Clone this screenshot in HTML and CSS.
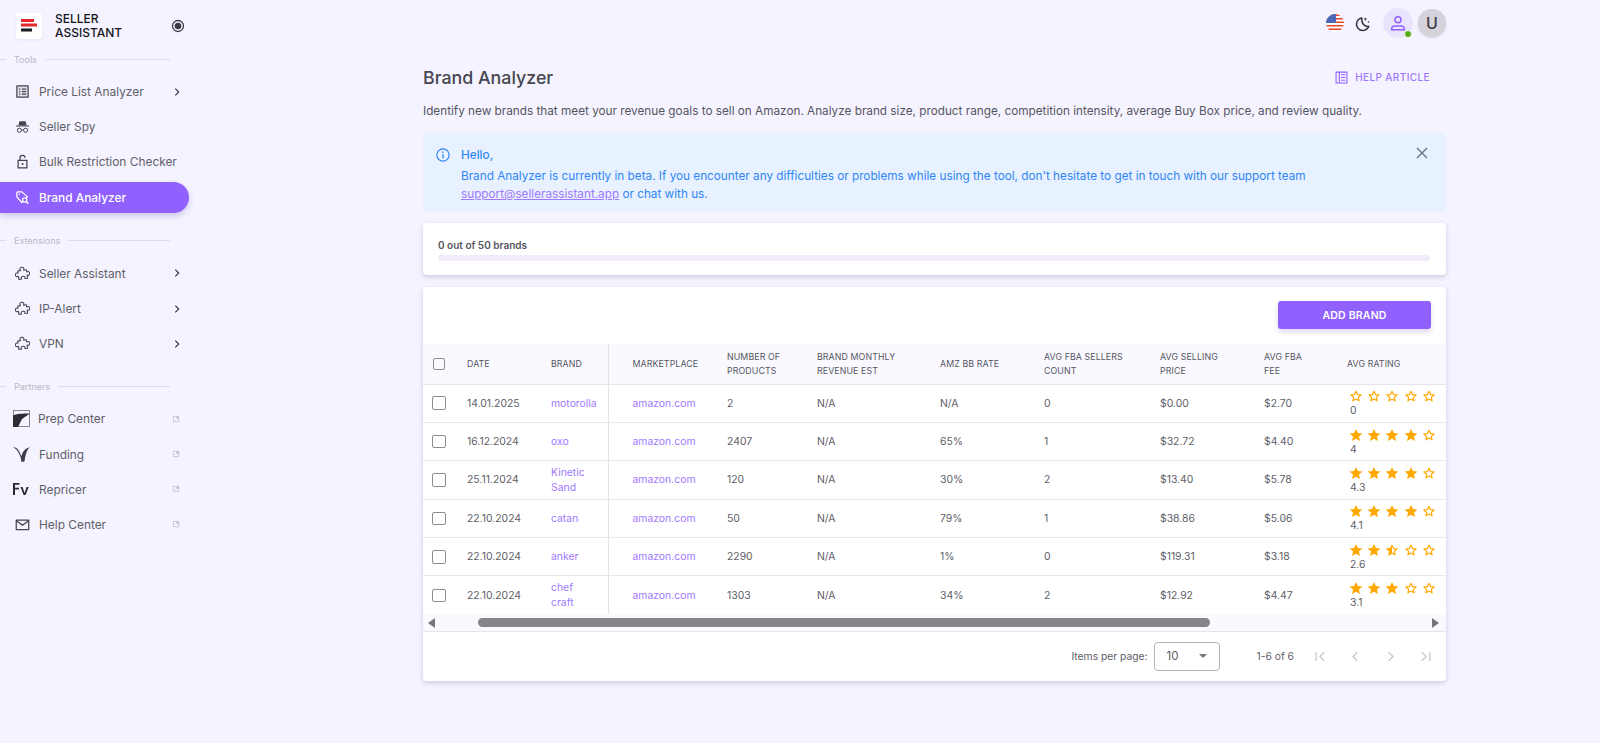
FILE: index.html
```html
<!DOCTYPE html>
<html lang="en">
<head>
<meta charset="utf-8">
<title>Brand Analyzer</title>
<link rel="stylesheet" href="styles.css">
</head>
<body>
<svg class="defs" width="0" height="0" aria-hidden="true">
  <defs>
    <symbol id="ext" viewBox="0 0 24 24"><path fill="none" stroke="currentColor" stroke-width="2" d="M4 4h16v16H4zM10 14l8-8M12 6h6v6"/></symbol>
    <symbol id="puzzle" viewBox="0 0 24 24"><path fill="none" stroke="currentColor" stroke-width="1.700" stroke-linejoin="round" transform="rotate(-8 12 12)" d="M5 7H9.500C7.800 4 9.500 2 12 2S16.200 4 14.500 7H19V10.500C22 9 23.500 11 23.500 13S22 17 19 15.500V20.500H14.500C16 18 14.500 16.500 12 16.500S8 18 9.500 20.500H5V15.500C2 17 .5 15 .5 13S2 9 5 10.500Z"/></symbol>
    <symbol id="chev" viewBox="0 0 24 24"><path fill="none" stroke="currentColor" stroke-width="2.800" d="M8 4l8 8-8 8"/></symbol>
    <symbol id="sf" viewBox="0 0 24 24"><path fill="#ffa800" d="M12 1.500l3.200 7.200 7.800.8-5.900 5.200 1.700 7.700L12 18.400l-6.800 4 1.700-7.700L1 9.500l7.800-.8z"/></symbol>
    <symbol id="se" viewBox="0 0 24 24"><path fill="none" stroke="#ffa800" stroke-width="2" stroke-linejoin="round" d="M12 4l2.500 5.600 6.100.6-4.600 4.100 1.300 6L12 17.200l-5.300 3.100 1.300-6-4.600-4.100 6.100-.6z"/></symbol>
    <symbol id="sh" viewBox="0 0 24 24"><path fill="none" stroke="#ffa800" stroke-width="2" stroke-linejoin="round" d="M12 4l2.500 5.600 6.100.6-4.600 4.100 1.300 6L12 17.200"/><path fill="#ffa800" d="M12 1.500v16.900l-6.800 4 1.700-7.700L1 9.500l7.800-.8z"/></symbol>
  </defs>
</svg>

<div class="app">
  <aside class="sidebar">
    <div class="brandbar">
      <span class="logo">
        <svg width="18" height="14" viewBox="0 0 18 14"><rect x="1" y="0" width="13" height="3" fill="#e8262a"/><rect x="1" y="4.500" width="16" height="3" fill="#e8262a"/><rect x="1" y="9.500" width="11" height="3" fill="#1c1c22"/></svg>
      </span>
      <span class="logotext">SELLER<br>ASSISTANT</span>
      <svg class="radio" width="14" height="14" viewBox="0 0 14 14"><circle cx="7" cy="7" r="5.500" fill="none" stroke="#3a3a44" stroke-width="1.300"/><circle cx="7" cy="7" r="3.300" fill="#3a3a44"/></svg>
    </div>

    <div class="seclabel sec-tools">Tools</div>
    <nav class="menu">
      <a class="item"><svg class="ico" viewBox="0 0 24 24"><path fill="#e3e1ea" stroke="currentColor" stroke-width="2" stroke-linejoin="round" d="M3 3h18v18H3z"/><path fill="none" stroke="currentColor" stroke-width="2" d="M6.500 8h2M11 8h7M6.500 12h2M11 12h7M6.500 16h2M11 16h7"/></svg><span class="lbl">Price List Analyzer</span><svg class="chev"><use href="#chev"/></svg></a>
      <a class="item"><svg class="ico" viewBox="0 0 24 24"><path fill="currentColor" d="M7 3.500h10l1.500 6.500h-13zM1.500 10.500h21v1.600h-21z"/><circle cx="7" cy="18" r="3.300" fill="none" stroke="currentColor" stroke-width="1.600"/><circle cx="17" cy="18" r="3.300" fill="none" stroke="currentColor" stroke-width="1.600"/><path fill="none" stroke="currentColor" stroke-width="1.600" d="M10.300 17.500h3.400"/></svg><span class="lbl">Seller Spy</span></a>
      <a class="item"><svg class="ico" viewBox="0 0 24 24"><path fill="none" stroke="currentColor" stroke-width="2" d="M5 10h14v12H5zM8 10V6a4 4 0 0 1 8 0"/><circle cx="12" cy="16" r="1.600" fill="currentColor"/></svg><span class="lbl">Bulk Restriction Checker</span></a>
      <a class="item active"><svg class="ico" viewBox="0 0 24 24"><path fill="none" stroke="currentColor" stroke-width="2" stroke-linejoin="round" d="M3 3h8l9 8-2 2M3 3v8l8 9 2-2"/><circle cx="6.800" cy="6.800" r="1.200" fill="currentColor"/><circle cx="15.500" cy="16" r="3.300" fill="none" stroke="currentColor" stroke-width="2"/><path fill="none" stroke="currentColor" stroke-width="2" d="M18 18.500l3.500 3.500"/></svg><span class="lbl">Brand Analyzer</span></a>
    </nav>

    <div class="seclabel sec-ext">Extensions</div>
    <nav class="menu">
      <a class="item"><svg class="ico"><use href="#puzzle"/></svg><span class="lbl">Seller Assistant</span><svg class="chev"><use href="#chev"/></svg></a>
      <a class="item"><svg class="ico"><use href="#puzzle"/></svg><span class="lbl">IP-Alert</span><svg class="chev"><use href="#chev"/></svg></a>
      <a class="item"><svg class="ico"><use href="#puzzle"/></svg><span class="lbl">VPN</span><svg class="chev"><use href="#chev"/></svg></a>
    </nav>

    <div class="seclabel sec-part">Partners</div>
    <nav class="menu">
      <a class="item"><svg class="ico ico-wide" viewBox="0 0 17 17"><rect x="0.500" y="0.500" width="16" height="16" fill="#f5f3ff" stroke="#85858c"/><path fill="#2c2c33" d="M0 5.500C3 3.800 10 3.500 17 3.500L9 9 5 17H0z"/></svg><span class="lbl lbl-near">Prep Center</span><svg class="ext"><use href="#ext"/></svg></a>
      <a class="item"><svg class="ico ico-wide" viewBox="0 0 17 17"><path fill="#3c3a45" d="M0 1c3 0 5.500 2 7 6 .5 1.500 1 2 1.500 3.500C9.500 5.500 12 2.500 17 1c-3 2.500-4.500 7-5.500 14.500L8.500 16C8 11 6 4.500 0 1z"/></svg><span class="lbl">Funding</span><svg class="ext"><use href="#ext"/></svg></a>
      <a class="item"><svg class="ico ico-wide" viewBox="0 0 17 17"><path fill="#2c2c33" d="M0 2h6.500v1.800H2v3h4v1.800H2V14H0zM7.500 6h2.100l2 6 2-6h2.100l-3.100 8h-2z"/></svg><span class="lbl">Repricer</span><svg class="ext"><use href="#ext"/></svg></a>
      <a class="item"><svg class="ico" viewBox="0 0 24 24"><path fill="none" stroke="currentColor" stroke-width="2" stroke-linejoin="round" d="M2 5h20v15H2zM2 6l10 7 10-7"/></svg><span class="lbl">Help Center</span><svg class="ext"><use href="#ext"/></svg></a>
    </nav>
  </aside>

  <main class="main">
    <header class="topbar">
      <svg class="flag" viewBox="0 0 18 18">
        <clipPath id="fc"><circle cx="9" cy="9" r="9"/></clipPath>
        <g clip-path="url(#fc)">
          <rect width="18" height="18" fill="#fff"/>
          <path fill="#e8452f" d="M0 0h18v2H0zM0 4h18v1.500H0zM0 7.500h18V9H0zM0 11h18v1.500H0zM0 14.500h18V16H0z"/>
          <rect width="10" height="9" fill="#4b69b8"/>
        </g>
      </svg>
      <svg class="moon" viewBox="0 0 24 24"><path fill="none" stroke="#33333c" stroke-width="2" stroke-linejoin="round" d="M11 4a9 9 0 1 0 10 12c-6 1-11-4-10-12z"/><path fill="#33333c" d="M16 3l.8 1.900 1.900.8-1.900.8L16 8.500l-.8-2-1.900-.8 1.900-.8zM20.500 8l.5 1.300 1.300.5-1.300.5-.5 1.300-.5-1.300-1.300-.5 1.300-.5z"/></svg>
      <span class="userbtn">
        <svg width="18" height="18" viewBox="0 0 24 24"><circle cx="12" cy="7.500" r="4" fill="none" stroke="#9061ff" stroke-width="2"/><path fill="none" stroke="#9061ff" stroke-width="2" d="M3.500 21v-1.500c0-2 2-3.500 4-3.500h9c2 0 4 1.500 4 3.500V21z"/></svg>
        <span class="dot"></span>
      </span>
      <span class="avatar">U</span>
    </header>

    <div class="titlerow">
      <h1 class="title">Brand Analyzer</h1>
      <a class="help">
        <svg width="13" height="13" viewBox="0 0 24 24"><path fill="none" stroke="#9061ff" stroke-width="2" d="M2 2h20v20H2zM8 2v20M11 7h8M11 12h8M11 17h8"/></svg>
        HELP ARTICLE
      </a>
    </div>
    <p class="desc">Identify new brands that meet your revenue goals to sell on Amazon. Analyze brand size, product range, competition intensity, average Buy Box price, and review quality.</p>

    <section class="alert">
      <svg class="alert-ico" width="14" height="14" viewBox="0 0 24 24"><circle cx="12" cy="12" r="10.500" fill="none" stroke="#2f86f6" stroke-width="2"/><path fill="none" stroke="#2f86f6" stroke-width="2.200" d="M12 10.500v7M12 6v2.500"/></svg>
      <div class="alert-body">
        <div class="alert-head">Hello,</div>
        <div>Brand Analyzer is currently in beta. If you encounter any difficulties or problems while using the tool, don't hesitate to get in touch with our support team<br><a class="mail">support@sellerassistant.app</a> or chat with us.</div>
      </div>
      <svg class="close" width="12" height="12" viewBox="0 0 12 12"><path fill="none" stroke="#6c7380" stroke-width="1.400" d="M1 1l10 10M11 1L1 11"/></svg>
    </section>

    <section class="card progress">
      <div class="progress-label">0 out of 50 brands</div>
      <div class="progress-track"></div>
    </section>

    <section class="card tablecard">
      <div class="actions"><button class="addbtn">ADD BRAND</button></div>
      <table class="grid">
        <colgroup>
          <col class="c1"><col class="c2"><col class="c3"><col class="c4"><col class="c5"><col class="c6"><col class="c7"><col class="c8"><col class="c9"><col class="c10"><col class="c11">
        </colgroup>
        <thead>
          <tr>
            <th><span class="cb cb-h"></span></th><th>DATE</th><th class="sticky">BRAND</th><th class="mp">MARKETPLACE</th><th>NUMBER OF<br>PRODUCTS</th><th>BRAND MONTHLY<br>REVENUE EST</th><th>AMZ BB RATE</th><th>AVG FBA SELLERS<br>COUNT</th><th>AVG SELLING<br>PRICE</th><th>AVG FBA<br>FEE</th><th>AVG RATING</th>
          </tr>
        </thead>
        <tbody>
          <tr>
            <td><span class="cb"></span></td><td>14.01.2025</td><td class="sticky link">motorolla</td><td class="mp link">amazon.com</td><td>2</td><td>N/A</td><td>N/A</td><td>0</td><td>$0.00</td><td>$2.70</td>
            <td class="ratecell"><div class="stars"><svg><use href="#se"/></svg><svg><use href="#se"/></svg><svg><use href="#se"/></svg><svg><use href="#se"/></svg><svg><use href="#se"/></svg></div><div class="rate">0</div></td>
          </tr>
          <tr>
            <td><span class="cb"></span></td><td>16.12.2024</td><td class="sticky link">oxo</td><td class="mp link">amazon.com</td><td>2407</td><td>N/A</td><td>65%</td><td>1</td><td>$32.72</td><td>$4.40</td>
            <td class="ratecell"><div class="stars"><svg><use href="#sf"/></svg><svg><use href="#sf"/></svg><svg><use href="#sf"/></svg><svg><use href="#sf"/></svg><svg><use href="#se"/></svg></div><div class="rate">4</div></td>
          </tr>
          <tr>
            <td><span class="cb"></span></td><td>25.11.2024</td><td class="sticky link">Kinetic<br>Sand</td><td class="mp link">amazon.com</td><td>120</td><td>N/A</td><td>30%</td><td>2</td><td>$13.40</td><td>$5.78</td>
            <td class="ratecell"><div class="stars"><svg><use href="#sf"/></svg><svg><use href="#sf"/></svg><svg><use href="#sf"/></svg><svg><use href="#sf"/></svg><svg><use href="#se"/></svg></div><div class="rate">4.3</div></td>
          </tr>
          <tr>
            <td><span class="cb"></span></td><td>22.10.2024</td><td class="sticky link">catan</td><td class="mp link">amazon.com</td><td>50</td><td>N/A</td><td>79%</td><td>1</td><td>$38.86</td><td>$5.06</td>
            <td class="ratecell"><div class="stars"><svg><use href="#sf"/></svg><svg><use href="#sf"/></svg><svg><use href="#sf"/></svg><svg><use href="#sf"/></svg><svg><use href="#se"/></svg></div><div class="rate">4.1</div></td>
          </tr>
          <tr>
            <td><span class="cb"></span></td><td>22.10.2024</td><td class="sticky link">anker</td><td class="mp link">amazon.com</td><td>2290</td><td>N/A</td><td>1%</td><td>0</td><td>$119.31</td><td>$3.18</td>
            <td class="ratecell"><div class="stars"><svg><use href="#sf"/></svg><svg><use href="#sf"/></svg><svg><use href="#sh"/></svg><svg><use href="#se"/></svg><svg><use href="#se"/></svg></div><div class="rate">2.6</div></td>
          </tr>
          <tr>
            <td><span class="cb"></span></td><td>22.10.2024</td><td class="sticky link">chef<br>craft</td><td class="mp link">amazon.com</td><td>1303</td><td>N/A</td><td>34%</td><td>2</td><td>$12.92</td><td>$4.47</td>
            <td class="ratecell"><div class="stars"><svg><use href="#sf"/></svg><svg><use href="#sf"/></svg><svg><use href="#sf"/></svg><svg><use href="#se"/></svg><svg><use href="#se"/></svg></div><div class="rate">3.1</div></td>
          </tr>
        </tbody>
      </table>
      <div class="hscroll">
        <span class="arrow arrow-l"></span>
        <span class="track"><span class="thumb"></span></span>
        <span class="arrow arrow-r"></span>
      </div>
      <footer class="pager">
        <span class="ipp">Items per page:</span>
        <span class="select"><span>10</span><span class="caret"></span></span>
        <span class="range">1-6 of 6</span>
        <span class="pbtns">
          <svg viewBox="0 0 24 24"><path d="M5 5v14M18 5l-7 7 7 7"/></svg>
          <svg viewBox="0 0 24 24"><path d="M15 5l-7 7 7 7"/></svg>
          <svg viewBox="0 0 24 24"><path d="M9 5l7 7-7 7"/></svg>
          <svg viewBox="0 0 24 24"><path d="M6 5l7 7-7 7M19 5v14"/></svg>
        </span>
      </footer>
    </section>
  </main>
</div>
</body>
</html>
```
FILE: styles.css
```css
* { box-sizing: border-box; }
html, body { margin: 0; padding: 0; height: 100%; overflow: hidden; }
body { background: #f5f3ff; font-family: Inter, "Liberation Sans", sans-serif; color: #55555f; font-size: 12px; }
.defs { position: absolute; }
.app { display: flex; height: 743px; }

.sidebar { width: 200px; flex: none; padding-top: 13px; }
.brandbar { display: flex; align-items: center; height: 26px; padding-left: 16px; padding-right: 15px; }
.logo { width: 26px; height: 26px; background: #fff; border-radius: 3px; display: flex; align-items: center; justify-content: center; box-shadow: 0 1px 3px rgba(60,40,120,.07); flex: none; }
.logotext { margin-left: 13px; font-size: 12px; line-height: 14px; font-weight: 500; color: #17171d; flex: 1; }
.radio { flex: none; }

.seclabel { display: flex; align-items: center; gap: 8px; height: 14px; font-size: 9px; color: #b9b8c4; padding-right: 30px; }
.seclabel::before { content: ""; width: 6px; height: 1px; background: #dedce8; }
.seclabel::after { content: ""; flex: 1; height: 1px; background: #dedce8; }
.sec-tools { margin-top: 13px; margin-bottom: 8px; }
.sec-ext { margin-top: 19px; margin-bottom: 8px; }
.sec-part { margin-top: 18px; margin-bottom: 8px; }

.menu { display: flex; flex-direction: column; }
.item { display: flex; align-items: center; height: 35.200px; padding-left: 15px; padding-right: 5px; width: 189px; color: #5f5f6a; font-size: 11.900px; position: relative; }
.item .ico { width: 15px; height: 15px; flex: none; color: #45454f; }
.item .ico-wide { width: 17px; height: 17px; margin-left: -2px; }
.lbl { margin-left: 9px; flex: 1; white-space: nowrap; }
.lbl-near { margin-left: 8px; }
.chev { width: 10px; height: 10px; color: #33333c; flex: none; margin-right: 2px; }
.ext { width: 8px; height: 8px; color: #b4b4bc; flex: none; margin-right: 4px; }
.item.active { color: #fff; font-weight: 500; z-index: 0; }
.item.active .ico { color: #fff; }
.item.active::before { content: ""; position: absolute; z-index: -1; left: 0; right: 0; top: 2px; bottom: 2px; background: #9061ff; border-radius: 0 16px 16px 0; box-shadow: 0 3px 6px rgba(90,60,180,.25); }

.main { flex: 1; padding: 0 154px 0 223px; }
.topbar { height: 46px; display: flex; align-items: center; justify-content: flex-end; }
.flag { width: 18px; height: 18px; }
.moon { width: 17px; height: 17px; margin-left: 10px; }
.userbtn { width: 30px; height: 30px; border-radius: 50%; background: #e9e4fd; display: flex; align-items: center; justify-content: center; margin-left: 12px; position: relative; }
.dot { position: absolute; width: 6px; height: 6px; border-radius: 50%; background: #4caf0e; right: 1px; bottom: 0; border: 1px solid #f5f3ff; box-sizing: content-box; }
.avatar { width: 28px; height: 28px; border-radius: 50%; background: #d5d2d9; color: #3a3a44; font-size: 16px; font-weight: 500; display: flex; align-items: center; justify-content: center; margin-left: 5px; box-shadow: 0 1px 3px rgba(0,0,0,.12); }

.titlerow { display: flex; align-items: center; justify-content: space-between; height: 28px; margin-top: 17px; }
.title { margin: 0; font-size: 17.800px; font-weight: 500; color: #46464f; }
.help { display: flex; align-items: center; gap: 7px; font-size: 10px; font-weight: 500; letter-spacing: .4px; color: #9d78ff; margin-right: 16px; }
.desc { margin: 12px 0 0; font-size: 11.750px; line-height: 16px; color: #55555f; white-space: nowrap; }

.alert { display: flex; margin-top: 14px; height: 79px; background: #e8f1ff; border-radius: 4px; padding: 13px 16px 0 13px; color: #2f86f6; font-size: 11.750px; line-height: 18px; }
.alert-ico { flex: none; margin-top: 2px; }
.alert-body { margin-left: 11px; flex: 1; }
.alert-head { font-weight: 500; margin-bottom: 3px; }
.mail { color: #a079ff; text-decoration: underline; }
.close { flex: none; margin: 1px 2px 0 0; }

.card { background: #fff; border-radius: 4px; box-shadow: 0 2px 5px rgba(70,60,110,.22); }
.progress { margin-top: 11px; height: 52px; padding: 15px 16px 0 15px; }
.progress-label { font-size: 10px; font-weight: 600; line-height: 14px; color: #55555f; }
.progress-track { height: 6px; margin-top: 3px; border-radius: 3px; background: #f1ebfc; }

.tablecard { margin-top: 12px; height: 394px; }
.actions { height: 57px; display: flex; justify-content: flex-end; align-items: flex-start; padding: 14px 15px 0 0; }
.addbtn { width: 153px; height: 28px; border: 0; border-radius: 3px; background: #9061ff; color: #fff; font: 600 10.500px Inter, "Liberation Sans", sans-serif; letter-spacing: .2px; box-shadow: 0 3px 5px rgba(90,60,180,.2); }

.grid { width: 1023px; table-layout: fixed; border-collapse: collapse; font-size: 10.400px; color: #5e5e68; }
.c1 { width: 44px; } .c2 { width: 84px; } .c3 { width: 57px; } .c4 { width: 119px; } .c5 { width: 90px; } .c6 { width: 123px; } .c7 { width: 104px; } .c8 { width: 116px; } .c9 { width: 104px; } .c10 { width: 83px; } .c11 { width: 99px; }
.grid th { height: 40px; background: #faf9ff; font-size: 8.800px; font-weight: 400; line-height: 13.500px; color: #55555f; text-align: left; padding: 0; border-bottom: 1px solid #e6e5ec; letter-spacing: .1px; }
.grid td { height: 38.400px; padding: 0; border-bottom: 1px solid #e9e8ee; line-height: 15px; }
.grid tbody tr:last-child td { border-bottom: 0; }
.grid th:first-child, .grid td:first-child { padding-left: 9px; }
.grid th.sticky, .grid td.sticky { border-right: 1px solid #e3e2e9; }
.grid .mp { padding-left: 24px; }
.grid .ratecell { padding-left: 2px; }
.grid .link { color: #a079ff; }
.cb { display: block; width: 13.500px; height: 13.500px; border: 1.700px solid #8d8c94; border-radius: 2px; }
.cb-h { width: 11.500px; height: 11.500px; margin-left: 1px; }
.stars { display: flex; gap: 4.200px; height: 14px; }
.stars svg { width: 14px; height: 14px; flex: none; }
.rate { font-size: 10.400px; line-height: 13px; margin-top: 1px; margin-left: 1px; }

.hscroll { height: 18px; display: flex; align-items: center; background: #faf9ff; border-bottom: 1px solid #e6e5ec; padding: 0 7px 0 5px; }
.arrow { width: 0; height: 0; border-style: solid; flex: none; }
.arrow-l { border-width: 5.500px 7px 5.500px 0; border-color: transparent #77767c transparent transparent; }
.arrow-r { border-width: 5.500px 0 5.500px 7px; border-color: transparent transparent transparent #77767c; }
.track { flex: 1; padding-left: 43px; padding-right: 222px; }
.thumb { display: block; height: 9px; border-radius: 5px; background: #86858a; }

.pager { height: 48px; display: flex; align-items: center; justify-content: flex-end; padding-right: 13px; font-size: 10.300px; color: #5e5e68; }
.select { width: 66px; height: 29px; border: 1px solid #b5b4ba; border-radius: 4px; margin-left: 6px; display: flex; align-items: center; justify-content: space-between; padding: 0 12px; font-size: 11.500px; }
.caret { width: 0; height: 0; border-style: solid; border-width: 4px 4px 0; border-color: #77767c transparent transparent; }
.range { margin-left: 37px; }
.pbtns { display: flex; gap: 20px; margin-left: 19px; }
.pbtns svg { width: 15px; height: 15px; fill: none; stroke: #c5c4ca; stroke-width: 2; }
```
